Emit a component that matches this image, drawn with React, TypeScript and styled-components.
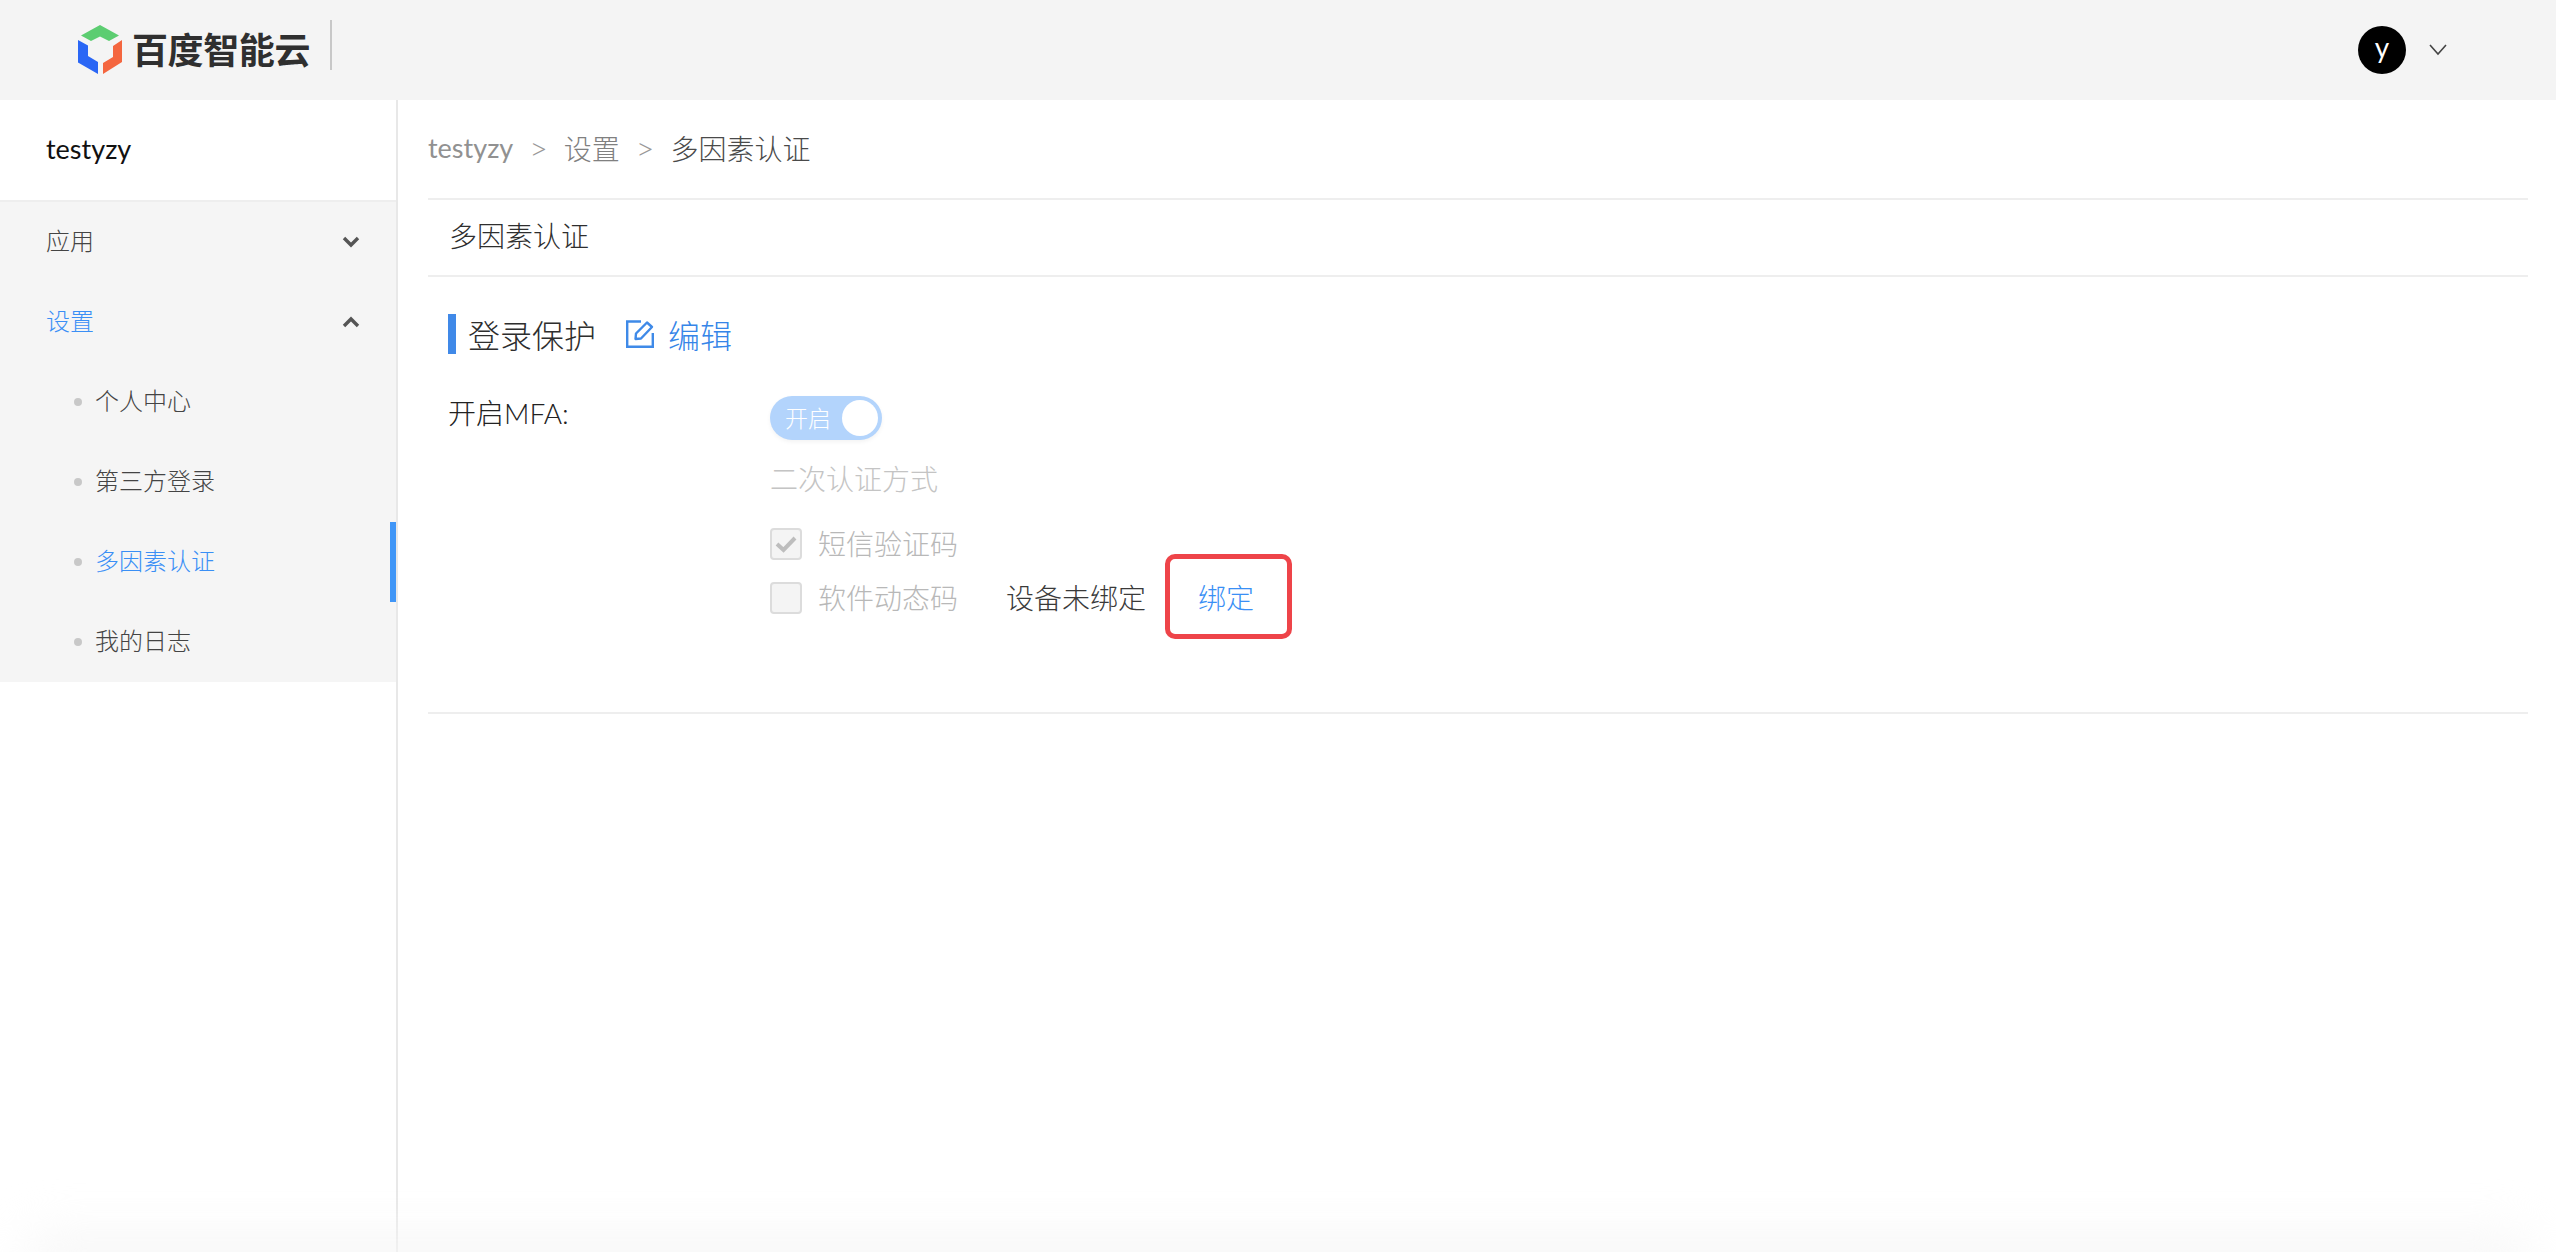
import React from "react";
import styled, { createGlobalStyle } from "styled-components";

const Global = createGlobalStyle`
  html, body { margin: 0; padding: 0; background: #fff; }
  body { font-family: "Noto Sans CJK SC", "Lato", sans-serif; font-weight: 300; overflow: hidden; }
  * { box-sizing: border-box; }
`;

const latin = `"Lato", "Noto Sans CJK SC", sans-serif`;

const Page = styled.div`
  width: 2556px;
  height: 1252px;
  display: flex;
  flex-direction: column;
  position: relative;
  overflow: hidden;
`;

const Header = styled.header`
  height: 100px;
  flex: none;
  background: #f4f4f4;
  display: flex;
  align-items: center;
  justify-content: space-between;
  padding: 0 109px 0 78px;
`;

const Brand = styled.div`
  display: flex;
  align-items: center;
  gap: 9px;
`;

const BrandName = styled.span`
  font-size: 36px;
  font-weight: 700;
  letter-spacing: -0.4px;
  line-height: 40px;
  padding-bottom: 4px;
  color: #2f2f2f;
`;

const BrandDivider = styled.span`
  width: 2px;
  height: 50px;
  margin: -10px 0 0 11px;
  background: #c8c8c8;
`;

const UserArea = styled.div`
  display: flex;
  align-items: center;
  gap: 23px;
`;

const Avatar = styled.div`
  width: 48px;
  height: 48px;
  border-radius: 50%;
  background: #000;
  color: #fff;
  font-family: ${latin};
  font-weight: 400;
  font-size: 28px;
  line-height: 42px;
  text-align: center;
`;

const Body = styled.div`
  flex: 1;
  display: flex;
  min-height: 0;
`;

const Sidebar = styled.aside`
  width: 398px;
  flex: none;
  border-right: 2px solid #e8e8e8;
`;

const SideTitle = styled.div`
  height: 102px;
  padding: 0 0 4px 46px;
  display: flex;
  align-items: center;
  border-bottom: 2px solid #eeeeee;
  font-family: ${latin};
  font-weight: 400;
  font-size: 27px;
  color: #111;
`;

const Menu = styled.nav`
  background: #f5f5f5;
  height: 480px;
`;

const MenuRow = styled.div<{ $active?: boolean }>`
  height: 80px;
  padding: 0 36px 0 46px;
  display: flex;
  align-items: center;
  justify-content: space-between;
  font-size: 24px;
  color: ${(p) => (p.$active ? "#3a8ff5" : "#444")};
`;

const SubRow = styled.div<{ $active?: boolean }>`
  height: 80px;
  padding-left: 74px;
  display: flex;
  align-items: center;
  gap: 13px;
  position: relative;
  font-size: 24px;
  color: ${(p) => (p.$active ? "#3a8ff5" : "#444")};
  &::after {
    content: "";
    display: ${(p) => (p.$active ? "block" : "none")};
    position: absolute;
    right: 0;
    top: 0;
    bottom: 0;
    width: 6px;
    background: #4096f7;
  }
`;

const RowText = styled.span`
  padding-bottom: 6px;
`;

const Dot = styled.span`
  width: 8px;
  height: 8px;
  border-radius: 50%;
  background: #c8c8c8;
`;

const Main = styled.main`
  flex: 1;
  padding: 0 28px 0 30px;
  min-width: 0;
`;

const Breadcrumb = styled.div`
  height: 98px;
  display: flex;
  align-items: center;
  padding-bottom: 3px;
  font-size: 28px;
  color: #999;
`;

const CrumbRoot = styled.span`
  font-family: ${latin};
  font-weight: 400;
  font-size: 27px;
  color: #919191;
`;

const Crumb = styled.span<{ $current?: boolean }>`
  color: ${(p) => (p.$current ? "#4a4a4a" : "#808080")};
`;

const CrumbSep = styled.span`
  font-family: ${latin};
  font-weight: 300;
  font-size: 32px;
  margin: 0 16px;
  color: #999;
`;

const TabTitle = styled.div`
  height: 79px;
  padding: 0 0 5px 21px;
  display: flex;
  align-items: center;
  border-top: 2px solid #eeeeee;
  border-bottom: 2px solid #eeeeee;
  font-size: 28px;
  color: #2e2e2e;
`;

const Panel = styled.section`
  height: 437px;
  padding: 37px 0 0 20px;
  border-bottom: 2px solid #eeeeee;
`;

const SectionHead = styled.div`
  display: flex;
  align-items: center;
  height: 40px;
`;

const SectionMark = styled.span`
  width: 8px;
  height: 40px;
  background: #4089e8;
  margin-right: 12px;
`;

const SectionName = styled.span`
  font-size: 32px;
  color: #2e2e2e;
`;

const EditLink = styled.span`
  margin-left: 30px;
  display: flex;
  align-items: center;
  gap: 14px;
  font-size: 32px;
  color: #3585e8;
`;

const FormRow = styled.div`
  display: flex;
  margin-top: 40px;
`;

const FormLabel = styled.div`
  width: 322px;
  flex: none;
  font-family: ${latin};
  font-weight: 300;
  font-size: 28px;
  line-height: 36px;
  margin-top: 1px;
  color: #222;
`;

const FormBody = styled.div`
  display: flex;
  flex-direction: column;
  align-items: flex-start;
`;

const Toggle = styled.div`
  width: 112px;
  height: 44px;
  margin-top: 2px;
  border-radius: 22px;
  background: #b3d4fc;
  box-shadow: 0 2px 4px rgba(0, 0, 0, 0.05);
  display: flex;
  align-items: center;
  justify-content: space-between;
  padding: 0 4px 0 15px;
  font-size: 23px;
  color: #fff;
`;

const ToggleText = styled.span`
  padding-bottom: 3px;
`;

const Knob = styled.span`
  width: 36px;
  height: 36px;
  border-radius: 50%;
  background: #fff;
`;

const MethodTitle = styled.div`
  margin-top: 16px;
  font-size: 28px;
  line-height: 44px;
  color: #c4c4c4;
`;

const CheckRow = styled.div`
  display: flex;
  align-items: center;
  height: 54px;
`;

const FirstCheckRow = styled(CheckRow)`
  margin-top: 17px;
`;

const CheckBox = styled.span`
  width: 32px;
  height: 32px;
  border: 2px solid #dcdcdc;
  border-radius: 4px;
  background: #f4f4f4;
  display: flex;
  align-items: center;
  justify-content: center;
`;

const CheckLabel = styled.span`
  margin-left: 16px;
  padding-bottom: 3px;
  font-size: 28px;
  color: #b8b8b8;
`;

const DeviceStatus = styled.span`
  margin-left: 48px;
  padding-bottom: 2px;
  font-size: 28px;
  color: #3a3a3a;
`;

const BindBox = styled.span`
  margin: -3px 0 0 19px;
  width: 127px;
  height: 85px;
  border: 5px solid #ee4449;
  border-radius: 10px;
  display: flex;
  align-items: center;
  padding-left: 28px;
  font-size: 28px;
  color: #3a8ff5;
`;

const BottomGlow = styled.div`
  position: absolute;
  left: 24px;
  right: 24px;
  bottom: -24px;
  height: 40px;
  border-radius: 20px;
  background: #f6f6f6;
  filter: blur(24px);
  pointer-events: none;
`;

const Chevron = ({ up }: { up?: boolean }) => (
  <svg width="18" height="12" viewBox="0 0 18 12" fill="none">
    <path
      d={up ? "M2 10 L9 3 L16 10" : "M2 2 L9 9 L16 2"}
      stroke="#555"
      strokeWidth="3.4"
    />
  </svg>
);

const Logo = () => (
  <svg width="45" height="50" viewBox="0 0 45 50">
    <path d="M22 0 L41 10.5 L31 16 L22 11.5 L13 16 L3 10.5 Z" fill="#5ccd71" />
    <path d="M0 15 L10 20.5 L10 31 L20 37 L20 49 L0 37.5 Z" fill="#2a66f5" />
    <path d="M44 15 L44 37 L25 49 L25 38 L35 32 L35 21 Z" fill="#f4663f" />
  </svg>
);

const EditIcon = () => (
  <svg width="28" height="28" viewBox="0 0 28 28" fill="none" stroke="#3f8ae8" strokeWidth="2.4">
    <path d="M15 1.5 H1.2 V26.8 H26.8 V13" />
    <path d="M9.5 19 L10 13.5 L21 2.5 L26 7 L15 18.5 Z" strokeLinejoin="round" />
  </svg>
);

const Check = () => (
  <svg width="22" height="18" viewBox="0 0 22 18" fill="none">
    <path d="M2 9 L8.5 15 L20 3" stroke="#bdbdbd" strokeWidth="4" />
  </svg>
);

export default function App() {
  return (
    <Page>
      <Global />
      <Header>
        <Brand>
          <Logo />
          <BrandName>百度智能云</BrandName>
          <BrandDivider />
        </Brand>
        <UserArea>
          <Avatar>y</Avatar>
          <svg width="18" height="12" viewBox="0 0 18 12" fill="none">
            <path d="M1 1 L9 10 L17 1" stroke="#444" strokeWidth="1.6" />
          </svg>
        </UserArea>
      </Header>
      <Body>
        <Sidebar>
          <SideTitle>testyzy</SideTitle>
          <Menu>
            <MenuRow>
              <RowText>应用</RowText>
              <Chevron />
            </MenuRow>
            <MenuRow $active>
              <RowText>设置</RowText>
              <Chevron up />
            </MenuRow>
            <SubRow>
              <Dot />
              <RowText>个人中心</RowText>
            </SubRow>
            <SubRow>
              <Dot />
              <RowText>第三方登录</RowText>
            </SubRow>
            <SubRow $active>
              <Dot />
              <RowText>多因素认证</RowText>
            </SubRow>
            <SubRow>
              <Dot />
              <RowText>我的日志</RowText>
            </SubRow>
          </Menu>
        </Sidebar>
        <Main>
          <Breadcrumb>
            <CrumbRoot>testyzy</CrumbRoot>
            <CrumbSep>&gt;</CrumbSep>
            <Crumb>设置</Crumb>
            <CrumbSep>&gt;</CrumbSep>
            <Crumb $current>多因素认证</Crumb>
          </Breadcrumb>
          <TabTitle>多因素认证</TabTitle>
          <Panel>
            <SectionHead>
              <SectionMark />
              <SectionName>登录保护</SectionName>
              <EditLink>
                <EditIcon />
                编辑
              </EditLink>
            </SectionHead>
            <FormRow>
              <FormLabel>开启MFA:</FormLabel>
              <FormBody>
                <Toggle>
                  <ToggleText>开启</ToggleText>
                  <Knob />
                </Toggle>
                <MethodTitle>二次认证方式</MethodTitle>
                <FirstCheckRow>
                  <CheckBox>
                    <Check />
                  </CheckBox>
                  <CheckLabel>短信验证码</CheckLabel>
                </FirstCheckRow>
                <CheckRow>
                  <CheckBox />
                  <CheckLabel>软件动态码</CheckLabel>
                  <DeviceStatus>设备未绑定</DeviceStatus>
                  <BindBox>绑定</BindBox>
                </CheckRow>
              </FormBody>
            </FormRow>
          </Panel>
        </Main>
      </Body>
      <BottomGlow />
    </Page>
  );
}
